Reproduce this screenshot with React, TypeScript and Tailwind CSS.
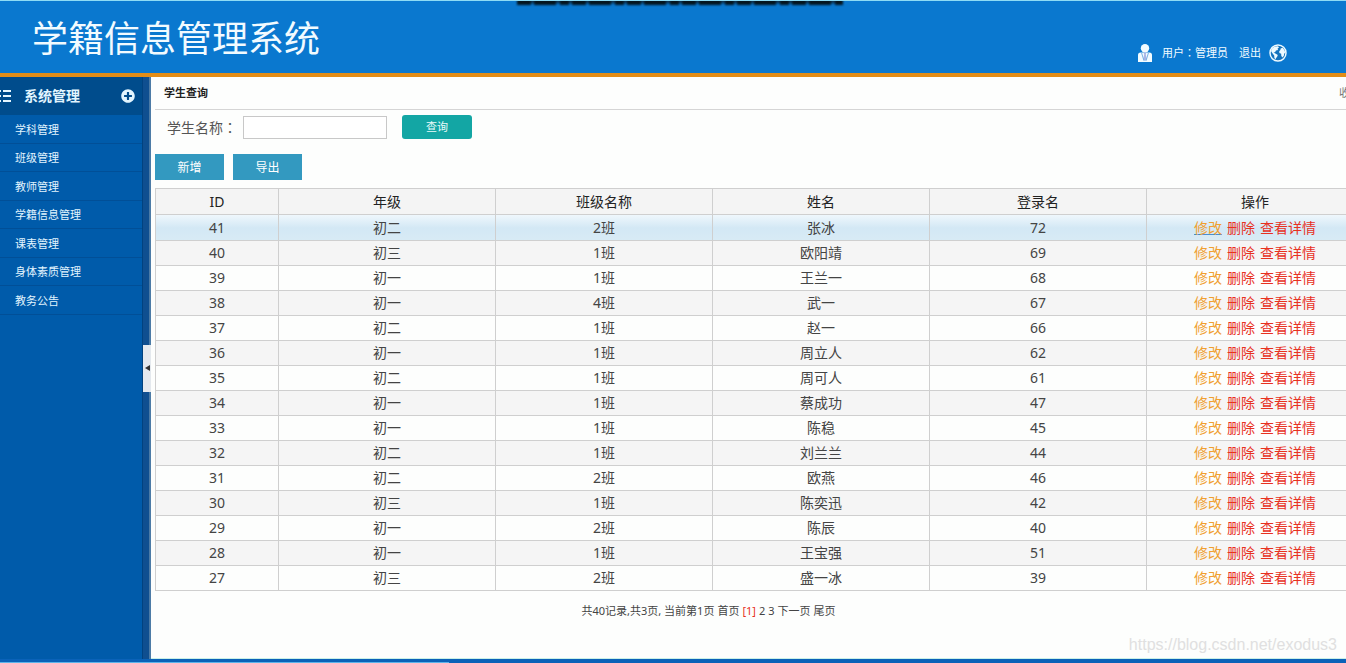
import { useState } from "react";
import { FaPlusCircle } from "react-icons/fa";
import { clsx } from "clsx";

const menuItems = ["学科管理", "班级管理", "教师管理", "学籍信息管理", "课表管理", "身体素质管理", "教务公告"];

const columns = ["ID", "年级", "班级名称", "姓名", "登录名", "操作"];

interface Student {
  id: number;
  grade: string;
  className: string;
  name: string;
  login: string;
}

const students: Student[] = [
  { id: 41, grade: "初二", className: "2班", name: "张冰", login: "72" },
  { id: 40, grade: "初三", className: "1班", name: "欧阳靖", login: "69" },
  { id: 39, grade: "初一", className: "1班", name: "王兰一", login: "68" },
  { id: 38, grade: "初一", className: "4班", name: "武一", login: "67" },
  { id: 37, grade: "初二", className: "1班", name: "赵一", login: "66" },
  { id: 36, grade: "初一", className: "1班", name: "周立人", login: "62" },
  { id: 35, grade: "初二", className: "1班", name: "周可人", login: "61" },
  { id: 34, grade: "初一", className: "1班", name: "蔡成功", login: "47" },
  { id: 33, grade: "初一", className: "1班", name: "陈稳", login: "45" },
  { id: 32, grade: "初二", className: "1班", name: "刘兰兰", login: "44" },
  { id: 31, grade: "初二", className: "2班", name: "欧燕", login: "46" },
  { id: 30, grade: "初三", className: "1班", name: "陈奕迅", login: "42" },
  { id: 29, grade: "初一", className: "2班", name: "陈辰", login: "40" },
  { id: 28, grade: "初一", className: "1班", name: "王宝强", login: "51" },
  { id: 27, grade: "初三", className: "2班", name: "盛一冰", login: "39" },
];

function UserIcon() {
  return (
    <svg viewBox="0 0 14 18" className="h-[18px] w-[14px]" aria-hidden="true">
      <circle cx="7" cy="4.2" r="4.2" fill="#f2fbff" />
      <path d="M0 18V11Q0 8.4 2.6 8.4H11.4Q14 8.4 14 11V18Z" fill="#f2fbff" />
      <path d="M5.6 8.6H8.4L7.8 10.6L8.6 15L7 17L5.4 15L6.2 10.6Z" fill="#a9b6e6" />
      <path d="M3.6 9L6 16.8M10.4 9L8 16.8" stroke="#5b9bdc" strokeWidth="0.8" />
    </svg>
  );
}

function GlobeIcon() {
  return (
    <svg viewBox="0 0 18 18" className="size-[18px]" aria-hidden="true">
      <circle cx="9" cy="9" r="8" fill="#1473bd" stroke="#eefaff" strokeWidth="1.5" />
      <path d="M2 7L3.4 4L6 2.4L9 2.2L10 3.4L8.6 4.4L9 6L7 6.6L6 8.2L4.4 8.4L6.8 9.8L8.8 11L8 13L7 14L6.6 15.6L5.4 14L5.2 11.6L3.6 9.4Z" fill="#eefaff" />
      <path d="M11.6 4.4L13.6 3.8L15.4 6L16.2 8.4L15.2 9.8L14.8 12L13.2 13.6L12.2 11.6L12.2 9.8L10.4 9L10.2 7.2L11.4 6Z" fill="#eefaff" />
    </svg>
  );
}

function ListIcon() {
  return (
    <svg viewBox="0 0 12 12" className="h-3 w-3" aria-hidden="true">
      <path d="M0 1H1M0 6H1M0 11H1M3 1H11M3 6H11M3 11H11" stroke="#e6f6ff" strokeWidth="2" />
    </svg>
  );
}

// full-width colon set in the middle of its box
function Colon() {
  return <span className="font-['Noto_Sans_CJK_TC',sans-serif]">：</span>;
}

function Header() {
  return (
    <header className="relative flex h-[77px] items-center justify-between overflow-hidden border-t border-b-4 border-t-[#8fdcf5] border-b-[#e38d17] bg-[#0a78cf] pr-[59px] pl-8 text-[#f2fbff]">
      <svg viewBox="0 0 330 8" className="absolute -top-1 left-1/2 h-2 w-[330px] -translate-x-[158px] blur-[1px]" aria-hidden="true">
        <path d="M2 4H328" stroke="#0b3556" strokeWidth="5" />
        <path d="M2 5H328" stroke="#04151f" strokeWidth="6" strokeDasharray="14 3 22 4 9 3" />
      </svg>
      <h1 className="mt-1 text-4xl font-normal whitespace-nowrap">学籍信息管理系统</h1>
      <div className="mt-8 flex items-center text-[11px] whitespace-nowrap">
        <UserIcon />
        <span className="ml-[10px]">用户<Colon />管理员</span>
        <a href="#logout" className="mr-2 ml-[11px]">退出</a>
        <GlobeIcon />
      </div>
    </header>
  );
}

function Sidebar() {
  return (
    <aside className="w-[142px] shrink-0 bg-[#005baa] text-[#e2f5ff]">
      <div className="flex h-[38px] items-center bg-[#004c8c] pr-[7px]">
        <ListIcon />
        <h2 className="ml-3 text-sm font-bold">系统管理</h2>
        <button type="button" aria-label="展开" className="ml-auto">
          <FaPlusCircle className="size-[14px]" />
        </button>
      </div>
      <nav className="flex h-[200px] flex-col text-[11px]">
        {menuItems.map((item) => (
          <a key={item} href="#menu" className="flex flex-1 items-center border-b border-[#014f97] pt-[2px] pl-[15px]">
            {item}
          </a>
        ))}
      </nav>
    </aside>
  );
}

function Splitter({ onToggle }: { onToggle: () => void }) {
  return (
    <div className="flex w-[9px] shrink-0 items-center border-r-2 border-l border-r-[#4c7ba6] border-l-[#01427f] bg-[#0f4f90]">
      <button
        type="button"
        aria-label="收起菜单"
        onClick={onToggle}
        className="relative -mr-2 flex h-[47px] w-2 shrink-0 items-center justify-center bg-[#e4e9ee]"
      >
        <svg viewBox="0 0 5 6" className="h-[6px] w-[5px]" aria-hidden="true">
          <path d="M5 0V6L0 3Z" fill="#333" />
        </svg>
      </button>
    </div>
  );
}

function StudentTable() {
  const [activeId, setActiveId] = useState(41);

  return (
    <table className="mt-2 w-full table-fixed border-collapse text-center text-sm leading-5 text-[#444]">
      <thead>
        <tr className="h-[26px] bg-[#f4f4f4] text-[#222]">
          {columns.map((col) => (
            <th
              key={col}
              className={clsx("border border-[#cfcfcf] p-0 font-normal", col === "ID" && "w-[123px]")}
            >
              {col}
            </th>
          ))}
        </tr>
      </thead>
      <tbody>
        {students.map((s) => {
          const active = s.id === activeId;
          return (
            <tr
              key={s.id}
              onMouseEnter={() => setActiveId(s.id)}
              className={clsx(
                "h-[25px] first:h-[26px]",
                active ? "bg-linear-to-b from-[#eff7fc] via-[#d3e8f5] to-[#d8ebf5]" : "even:bg-[#f5f5f5]"
              )}
            >
              <td className="border border-[#cfcfcf] p-0">{s.id}</td>
              <td className="border border-[#cfcfcf] p-0">{s.grade}</td>
              <td className="border border-[#cfcfcf] p-0">{s.className}</td>
              <td className="border border-[#cfcfcf] p-0">{s.name}</td>
              <td className="border border-[#cfcfcf] p-0">{s.login}</td>
              <td className="border border-[#cfcfcf] p-0">
                <div className="flex justify-center gap-[5px] text-[#e8311f]">
                  <a href="#edit" className={clsx("text-[#f0a030]", active && "underline decoration-[#4a8fd0]")}>
                    修改
                  </a>
                  <a href="#delete">删除</a>
                  <a href="#detail">查看详情</a>
                </div>
              </td>
            </tr>
          );
        })}
      </tbody>
    </table>
  );
}

function Pagination() {
  return (
    <div className="mt-3 flex justify-center gap-[3px] pr-[102px] text-[11px] leading-4 text-[#444]">
      <span>共40记录,共3页, 当前第1页</span>
      <a href="#first">首页</a>
      <span className="text-[#e8311f]">[1]</span>
      <a href="#2">2</a>
      <a href="#3">3</a>
      <a href="#next">下一页</a>
      <a href="#last">尾页</a>
    </div>
  );
}

export default function App() {
  const [menuOpen, setMenuOpen] = useState(true);
  const [keyword, setKeyword] = useState("");

  return (
    <div className="flex min-h-screen flex-col overflow-hidden bg-[#fdfefd] font-['Noto_Sans','Noto_Sans_CJK_SC',sans-serif]">
      <Header />
      <div className="flex flex-1">
        {menuOpen && <Sidebar />}
        <Splitter onToggle={() => setMenuOpen(!menuOpen)} />
        <main className="relative min-w-0 flex-1 overflow-hidden border-b border-[#c9f0e8] pl-1">
          {/* the frame runs a little wider than the window */}
          <div className="-mr-[18px]">
            <div className="flex h-[33px] items-center justify-between border-b border-[#d5d5d5] pr-[14px] pl-[9px] text-[11px]">
              <h3 className="font-bold text-[#222]">学生查询</h3>
              <a href="#fold" className="text-[#777]">收</a>
            </div>
            <form className="mt-[5px] flex h-6 items-center pl-3" onSubmit={(e) => e.preventDefault()}>
              <label htmlFor="keyword" className="w-[76px] text-sm whitespace-nowrap text-[#555]">学生名称<Colon /></label>
              <input
                id="keyword"
                value={keyword}
                onChange={(e) => setKeyword(e.target.value)}
                className="h-[23px] w-36 border border-[#c8c8c8] bg-white px-1 text-sm"
              />
              <button type="submit" className="ml-[15px] h-6 w-[70px] rounded-[3px] bg-[#13a6a4] text-[11px] text-[#e8fbfa]">
                查询
              </button>
            </form>
            <div className="mt-[15px] flex gap-[9px] text-xs text-white">
              <button type="button" className="h-[26px] w-[69px] bg-[#3399c0] pt-[2px]">新增</button>
              <button type="button" className="h-[26px] w-[69px] bg-[#3399c0] pt-[2px]">导出</button>
            </div>
            <StudentTable />
            <Pagination />
          </div>
          <p className="absolute right-[9px] bottom-px font-['Liberation_Sans',sans-serif] text-base text-[#e0e0e0]">
            https://blog.csdn.net/exodus3
          </p>
        </main>
      </div>
      <footer className="flex h-1 flex-col justify-end bg-[#0a62b8]">
        <div className="h-px w-1/3 bg-[#5cb4ea]" />
      </footer>
    </div>
  );
}
